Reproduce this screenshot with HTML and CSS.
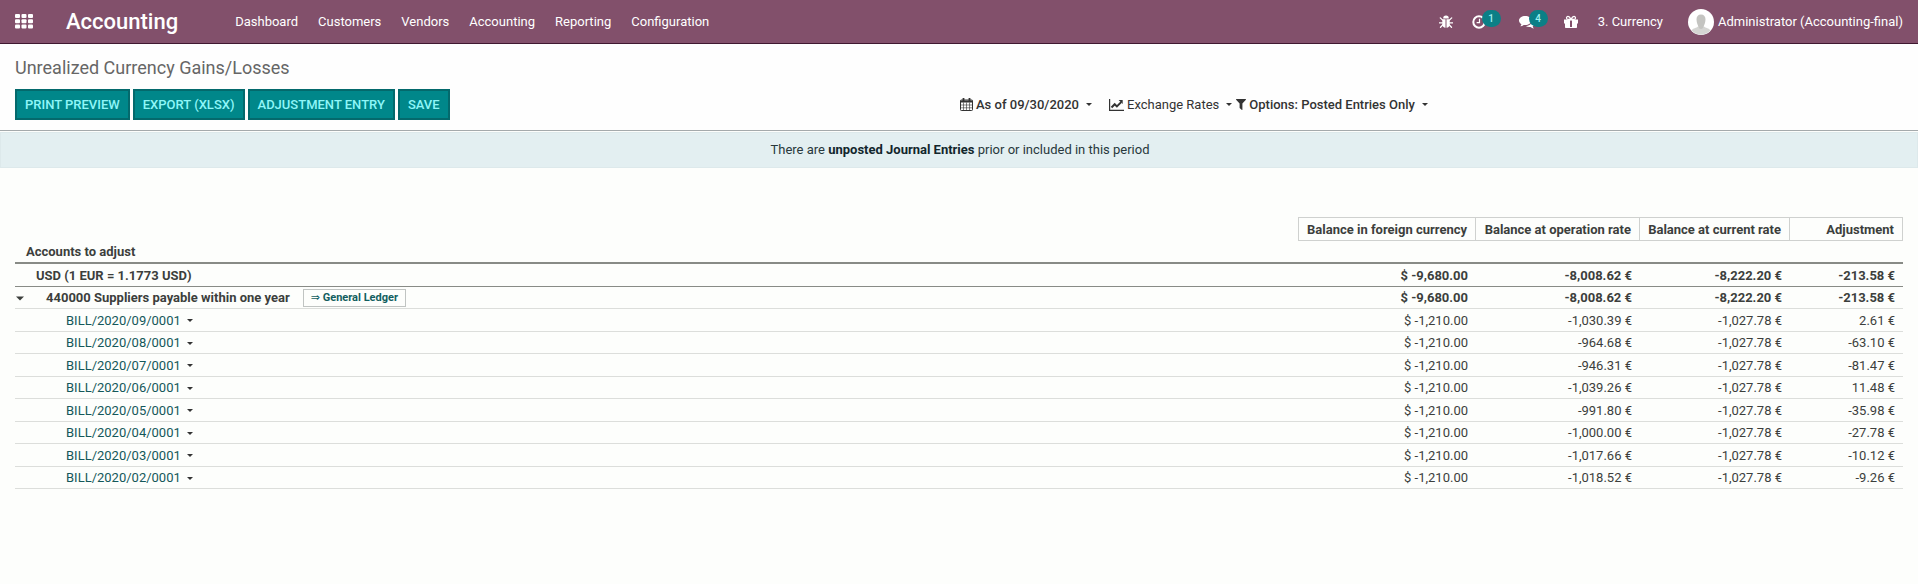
FILE: index.html
```html
<!DOCTYPE html>
<html lang="en">
<head>
<meta charset="utf-8">
<title>Unrealized Currency Gains/Losses</title>
<link rel="stylesheet" href="styles.css">
</head>
<body>
<header class="navbar">
  <button class="apps" aria-label="Applications">
    <svg width="18" height="15" viewBox="0 0 18 15" fill="currentColor"><rect width="5" height="4" rx="1"/><rect x="6.5" width="5" height="4" rx="1"/><rect x="13" width="5" height="4" rx="1"/><rect y="5.3" width="5" height="4" rx="1"/><rect x="6.5" y="5.3" width="5" height="4" rx="1"/><rect x="13" y="5.3" width="5" height="4" rx="1"/><rect y="10.6" width="5" height="4" rx="1"/><rect x="6.5" y="10.6" width="5" height="4" rx="1"/><rect x="13" y="10.6" width="5" height="4" rx="1"/></svg>
  </button>
  <a class="brand" href="#">Accounting</a>
  <nav class="menu">
    <a href="#">Dashboard</a>
    <a href="#">Customers</a>
    <a href="#">Vendors</a>
    <a href="#">Accounting</a>
    <a href="#">Reporting</a>
    <a href="#">Configuration</a>
  </nav>
  <div class="systray">
    <button class="tray bug" aria-label="Debug">
      <svg width="14" height="14" viewBox="0 0 14 14" fill="currentColor"><path d="M4.200 3.400a2.800 2.800 0 0 1 5.600 0z"/><path d="M3.300 4.200h3.200v8.600C4.600 12.600 3.300 11.200 3.300 9zM7.500 4.200h3.200V9c0 2.200-1.300 3.600-3.200 3.800z"/><path d="M1.300 2.900l2.300 2.200M12.700 2.900l-2.300 2.200M.5 7.800h3M13.500 7.800h-3M1.500 12.200l2.400-2.400M12.500 12.200l-2.400-2.400" fill="none" stroke="currentColor" stroke-width="1.300" stroke-linecap="round"/></svg>
    </button>
    <button class="tray clock" aria-label="Activities">
      <svg width="14" height="14" viewBox="0 0 14 14" fill="none" stroke="currentColor"><circle cx="7" cy="7" r="5.700" stroke-width="2"/><path d="M7.500 3.800v3.900H4.600" stroke-width="1.200"/></svg>
      <span class="badge">1</span>
    </button>
    <button class="tray chat" aria-label="Conversations">
      <svg width="16" height="14" viewBox="0 0 16 14" fill="currentColor"><path d="M6.200 1c3.400 0 6.200 2 6.200 4.500S9.600 10 6.200 10c-.5 0-1 0-1.500-.1-1 .8-2.100 1.200-3.400 1.300.6-.6 1-1.200 1.100-2C.9 8.300 0 7 0 5.500 0 3 2.800 1 6.200 1z"/><path d="M13.300 4.600C15 5.300 16 6.500 16 8c0 1.300-.9 2.500-2.300 3.300.1.800.6 1.500 1.200 2.100-1.300-.1-2.400-.6-3.400-1.400-1.600.3-3.500 0-4.800-.9 3.700 0 7-2.500 6.600-6.500z"/></svg>
      <span class="badge">4</span>
    </button>
    <button class="tray gift" aria-label="Rewards">
      <svg width="14" height="14" viewBox="0 0 14 14" fill="currentColor"><path d="M0 4.500h6V13H1.700c-.4 0-.7-.3-.7-.7V8.500H0zM14 4.500H8V13h4.300c.4 0 .7-.3.700-.7V8.500h1z"/><path d="M6 4.500h2v1H6zM6 12h2v1H6z"/><path d="M7 4.400C6.300 3 5.500 1.400 4 1.400a1.500 1.500 0 0 0 0 3h6a1.500 1.500 0 0 0 0-3c-1.500 0-2.300 1.600-3 3z" fill="none" stroke="currentColor" stroke-width="1.300"/></svg>
    </button>
    <a class="company" href="#">3. Currency</a>
    <a class="user" href="#">
      <svg width="26" height="26" viewBox="0 0 26 26"><circle cx="13" cy="13" r="13" fill="#fff"/><path d="M3.500 21.500c1.500-2.500 5-2.500 6.500-4h6c1.500 1.500 5 1.500 6.500 4a13 13 0 0 1-19 0z" fill="#d5d5d3"/><path d="M13 5.500c3 0 4.600 2 4.500 5-.1 3.800-1.500 5.700-2 7.500-.4 1.300-1.300 2-2.500 2s-2.100-.7-2.500-2c-.5-1.800-1.900-3.700-2-7.500-.1-3 1.500-5 4.500-5z" fill="#c4c4c1"/></svg>
      Administrator (Accounting-final)
    </a>
  </div>
</header>

<section class="panel">
  <h1>Unrealized Currency Gains/Losses</h1>
  <div class="panel-row">
    <div class="actions">
      <button>PRINT PREVIEW</button>
      <button>EXPORT (XLSX)</button>
      <button>ADJUSTMENT ENTRY</button>
      <button>SAVE</button>
    </div>
    <div class="filters">
      <button class="filter strong date">
        <svg width="13" height="13" viewBox="0 0 13 13" fill="none" stroke="currentColor"><rect x=".5" y="2" width="12" height="10.500" rx=".8"/><path d="M.5 3.500h12" stroke-width="2"/><path d="M.5 7h12M.5 9.800h12M3.500 4.500v8M6.500 4.500v8M9.500 4.500v8" stroke-width=".6"/><path d="M3.500 0v3M9.500 0v3" stroke-width="1.800"/></svg>
        As of 09/30/2020<span class="caret"></span>
      </button>
      <button class="filter rates">
        <svg width="15" height="12" viewBox="0 0 15 12" fill="none" stroke="currentColor"><path d="M.6 0v11.300H15" stroke-width="1.200"/><path d="M2.500 8.500l3.200-3.300 2.200 2.200 4.300-4.300" stroke-width="2"/><path d="M9.600 1h4.100v4.100z" fill="currentColor" stroke="none"/></svg>
        Exchange Rates<span class="caret"></span>
      </button>
      <button class="filter strong">
        <svg width="10" height="11" viewBox="0 0 10 11" fill="currentColor"><path d="M.4 0h9.200c.4 0 .5.500.3.800L6.400 4.500v5.900c0 .5-.4.700-.8.400L3.900 9.200c-.2-.2-.3-.3-.3-.5V4.500L.1.800C-.1.500 0 0 .4 0z"/></svg>
        Options: Posted Entries Only<span class="caret"></span>
      </button>
    </div>
  </div>
</section>

<p class="notice">There are <b>unposted Journal Entries</b> prior or included in this period</p>

<main class="report">
  <table>
    <colgroup><col><col class="c-foreign"><col class="c-operation"><col class="c-current"><col class="c-adjust"></colgroup>
    <thead>
      <tr class="heads"><td></td><th>Balance in foreign currency</th><th>Balance at operation rate</th><th>Balance at current rate</th><th>Adjustment</th></tr>
      <tr class="section"><th colspan="5">Accounts to adjust</th></tr>
    </thead>
    <tbody class="totals">
      <tr class="currency"><td>USD (1 EUR = 1.1773 USD)</td><td>$ -9,680.00</td><td>-8,008.62 €</td><td>-8,222.20 €</td><td>-213.58 €</td></tr>
      <tr class="account"><td><div class="name"><button class="fold" aria-label="Fold"><svg width="8" height="5" viewBox="0 0 8 5" fill="currentColor"><path d="M0 .5h8L4 4.500z"/></svg></button><span>440000 Suppliers payable within one year</span><a class="ledger" href="#"><span class="arrow">⇒</span> General Ledger</a></div></td><td>$ -9,680.00</td><td>-8,008.62 €</td><td>-8,222.20 €</td><td>-213.58 €</td></tr>
    </tbody>
    <tbody class="lines">
      <tr><td><a href="#">BILL/2020/09/0001<span class="caret"></span></a></td><td>$ -1,210.00</td><td>-1,030.39 €</td><td>-1,027.78 €</td><td>2.61 €</td></tr>
      <tr><td><a href="#">BILL/2020/08/0001<span class="caret"></span></a></td><td>$ -1,210.00</td><td>-964.68 €</td><td>-1,027.78 €</td><td>-63.10 €</td></tr>
      <tr><td><a href="#">BILL/2020/07/0001<span class="caret"></span></a></td><td>$ -1,210.00</td><td>-946.31 €</td><td>-1,027.78 €</td><td>-81.47 €</td></tr>
      <tr><td><a href="#">BILL/2020/06/0001<span class="caret"></span></a></td><td>$ -1,210.00</td><td>-1,039.26 €</td><td>-1,027.78 €</td><td>11.48 €</td></tr>
      <tr><td><a href="#">BILL/2020/05/0001<span class="caret"></span></a></td><td>$ -1,210.00</td><td>-991.80 €</td><td>-1,027.78 €</td><td>-35.98 €</td></tr>
      <tr><td><a href="#">BILL/2020/04/0001<span class="caret"></span></a></td><td>$ -1,210.00</td><td>-1,000.00 €</td><td>-1,027.78 €</td><td>-27.78 €</td></tr>
      <tr><td><a href="#">BILL/2020/03/0001<span class="caret"></span></a></td><td>$ -1,210.00</td><td>-1,017.66 €</td><td>-1,027.78 €</td><td>-10.12 €</td></tr>
      <tr><td><a href="#">BILL/2020/02/0001<span class="caret"></span></a></td><td>$ -1,210.00</td><td>-1,018.52 €</td><td>-1,027.78 €</td><td>-9.26 €</td></tr>
    </tbody>
  </table>
</main>
</body>
</html>
```
FILE: styles.css
```css
* { box-sizing: border-box; }

body {
  margin: 0;
  background: #fdfefc;
  color: #3c3f3c;
  font: 13px/20px Roboto, "Liberation Sans", sans-serif;
}

button {
  margin: 0;
  padding: 0;
  border: 0;
  background: none;
  color: inherit;
  font: inherit;
  cursor: pointer;
}

a { color: inherit; text-decoration: none; }
svg { display: block; flex: none; }

.caret {
  display: inline-block;
  flex: none;
  border: 3px solid transparent;
  border-top-color: #333;
  border-bottom: 0;
}

.navbar {
  display: flex;
  align-items: center;
  height: 44px;
  padding: 0 15px;
  background: #82506b;
  border-bottom: 1px solid #3f1830;
  color: #fff;
}

.brand {
  margin-left: 33px;
  font-size: 22px;
  font-weight: 500;
}

.menu {
  display: flex;
  gap: 20px;
  margin-left: 57px;
}

.systray {
  display: flex;
  align-items: center;
  margin-left: auto;
}

.tray { position: relative; }
.bug { margin-right: 19px; }
.clock { margin-right: 33px; }
.chat { margin-right: 29px; }
.gift { margin-right: 20px; }

.badge {
  position: absolute;
  left: 10px;
  bottom: 2px;
  width: 19px;
  height: 17px;
  border-radius: 9px;
  background: #0b7f86;
  color: #9ff2f2;
  font-size: 10px;
  font-weight: 500;
  line-height: 17px;
  text-align: center;
}

.company { margin-right: 25px; }

.user {
  display: flex;
  align-items: center;
  gap: 4px;
}

.panel {
  padding: 12px 15px 10px;
  border-bottom: 1px solid #a5aaac;
  background: #fefefe;
}

.panel h1 {
  margin: 0 0 9px;
  color: #666;
  font-size: 18px;
  font-weight: 400;
  line-height: 24px;
}

.panel-row {
  display: grid;
  grid-template-columns: 1fr 1fr;
  align-items: center;
}

.actions { display: flex; gap: 3px; }

.actions button {
  height: 31px;
  padding: 0 8px;
  border: 2px solid #04696c;
  background: #00878a;
  color: #8ff6f8;
  font-weight: 500;
}

.filters { display: flex; padding-left: 1px; color: #333; }

.filter {
  display: flex;
  align-items: center;
  gap: 3px;
}

.filter .caret { margin-left: 4px; }
.date { margin-right: 17px; }
.rates { margin-right: 4px; }
.strong { font-weight: 500; }

.notice {
  margin: 1px 0 0;
  padding: 7px 13px 7px 15px;
  border: 1px solid #dde9eb;
  background: #e3eff1;
  color: #28383c;
  text-align: center;
}

.notice b { color: #12262c; }

.report { padding: 49px 15px; }

table {
  width: 100%;
  border-collapse: separate;
  border-spacing: 0;
  table-layout: fixed;
}

.c-foreign { width: 178px; }
.c-operation { width: 164px; }
.c-current { width: 150px; }
.c-adjust { width: 113px; }

th, td {
  padding: 1px 8px 0;
  text-align: right;
  white-space: nowrap;
}

th { font-weight: 700; }
td:first-child, th[colspan] { text-align: left; }

.heads th {
  height: 24px;
  border: 1px solid #cfd1cf;
  border-left-width: 0;
}

.heads td + th { border-left-width: 1px; }

.section th {
  height: 23px;
  padding-left: 11px;
  border-bottom: 2px solid #888b86;
}

.totals td { font-weight: 700; }

.currency td {
  height: 23px;
  border-bottom: 1px solid #888b86;
}

.currency td:first-child { padding-left: 21px; }

.account td {
  height: 22px;
  border-bottom: 1px solid #dcdedb;
}

.account td:first-child { padding-left: 1px; }

.name { display: flex; align-items: center; }
.fold { margin-right: 22px; }

.ledger {
  margin-left: 13px;
  padding: 0 7px;
  border: 1px solid #c0c4c2;
  color: #125e60;
  font-size: 11px;
  font-weight: 700;
  line-height: 16px;
}

.arrow {
  font-family: "DejaVu Sans", sans-serif;
  font-weight: 400;
}

.lines td {
  height: 22px;
  border-bottom: 1px solid #dcdedb;
}

.lines tr:nth-child(odd) td { height: 23px; }
.lines td:first-child { padding-left: 51px; }

.lines a {
  display: flex;
  align-items: center;
  gap: 6px;
  color: #14585a;
}
```
